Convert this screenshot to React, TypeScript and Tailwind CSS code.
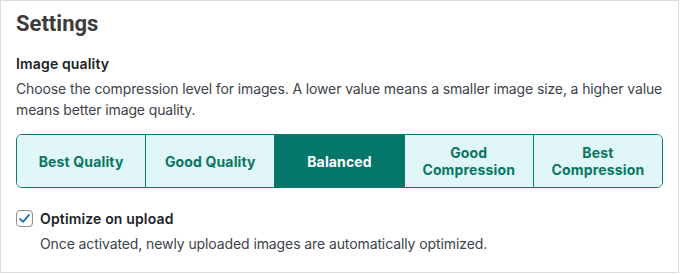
import React, { useState } from "react";

const levels = [
  "Best Quality",
  "Good Quality",
  "Balanced",
  "Good Compression",
  "Best Compression",
];

const levelLabels: Record<string, React.ReactNode> = {
  "Good Compression": (
    <>
      Good
      <br />
      Compression
    </>
  ),
  "Best Compression": (
    <>
      Best
      <br />
      Compression
    </>
  ),
};

export default function App() {
  const [level, setLevel] = useState("Balanced");
  const [optimize, setOptimize] = useState(true);

  return (
    <div className="w-[680px] h-[274px] bg-white font-['Inter',sans-serif] text-[#3c434a]">
      <div className="w-[679px] h-[273px] border border-[#dcdcde] bg-white px-[15px] pt-[9px]">
        {/* Heading */}
        <h2 className="font-['Roboto',sans-serif] text-[22px] leading-[28px] font-bold text-[#3c3c3c]">
          Settings
        </h2>

        {/* Image quality */}
        <h3 className="mt-[15px] text-[14px] leading-[21px] font-semibold tracking-[0.15px] text-[#1d2327]">
          Image quality
        </h3>
        <p className="mt-[4px] -mr-[12px] text-[14px] leading-[21px] tracking-[-0.12px]">
          Choose the compression level for images. A lower value means a smaller image size, a higher value means better image quality.
        </p>

        {/* Level selector */}
        <div className="mt-[14px] flex h-[54px] rounded-[6px] border border-[#0c7a6a] overflow-hidden">
          {levels.map((l, i) => {
            const active = l === level;
            return (
              <button
                key={l}
                onClick={() => setLevel(l)}
                className={
                  "flex-1 flex items-center justify-center text-center text-[14px] leading-[17px] font-bold tracking-[0.15px] " +
                  (i > 0 ? "border-l border-[#0c7a6a] " : "") +
                  (active ? "bg-[#03776a] text-white" : "bg-[#e0f6f8] text-[#0a7563]")
                }
              >
                <span>{levelLabels[l] ?? l}</span>
              </button>
            );
          })}
        </div>

        {/* Optimize on upload */}
        <label className="mt-[20px] flex items-center gap-[7px] cursor-pointer">
          <span
            onClick={() => setOptimize(!optimize)}
            className="flex items-center justify-center w-[17px] h-[17px] rounded-[4px] border border-[#8c8f94] bg-white"
          >
            {optimize && (
              <svg width="13" height="13" viewBox="0 0 16 16" fill="none">
                <path
                  d="M2.5 8.5 L6.2 12.2 L13.5 3.5"
                  stroke="#2271b1"
                  strokeWidth="2.2"
                  strokeLinecap="round"
                  strokeLinejoin="round"
                />
              </svg>
            )}
          </span>
          <span className="text-[14px] leading-[21px] font-semibold tracking-[0.15px] text-[#1d2327]">
            Optimize on upload
          </span>
        </label>
        <p className="mt-[4px] pl-[24px] text-[14px] leading-[21px] tracking-[-0.1px]">
          Once activated, newly uploaded images are automatically optimized.
        </p>
      </div>
    </div>
  );
}
